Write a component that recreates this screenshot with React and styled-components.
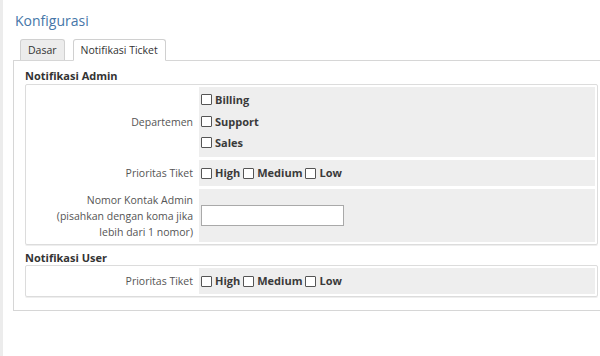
import React from 'react'
import styled, { createGlobalStyle } from 'styled-components'

const GlobalStyle = createGlobalStyle`
  html, body {
    margin: 0;
    padding: 0;
    background: #fff;
    overflow: hidden;
  }
  body {
    font-family: "Open Sans", "DejaVu Sans", sans-serif;
    color: #444;
  }
`

const Page = styled.div`
  width: 620px;
  min-height: 356px;
  border-left: 3px solid #ececec;
  box-sizing: border-box;
  padding: 11px 0 0 10px;
`

const Title = styled.h2`
  margin: 0 0 9px 2px;
  font-size: 14px;
  font-weight: 400;
  line-height: 19px;
  color: #4676a8;
`

const Tabs = styled.div`
  display: flex;
  gap: 8px;
  padding-left: 7px;
  border-bottom: 1px solid #d6d6d6;
  height: 21px;
`

const Tab = styled.div`
  box-sizing: border-box;
  padding: 0 7px;
  font-size: 10.5px;
  line-height: 20px;
  color: #333;
  border: 1px solid #d0d0d0;
  border-bottom: ${p => (p.active ? '1px solid #fff' : 'none')};
  background: ${p => (p.active ? '#fff' : '#ececec')};
  border-radius: 3px 3px 0 0;
  margin-bottom: ${p => (p.active ? '-1px' : '0')};
  height: ${p => (p.active ? '22px' : '21px')};
`

const Panel = styled.div`
  width: 597px;
  box-sizing: border-box;
  border: 1px solid #d6d6d6;
  border-top: none;
  padding: 8px 11px 13px 11px;
`

const Legend = styled.div`
  font-size: 11px;
  font-weight: 700;
  color: #333;
  line-height: 14px;
  margin: 0 0 ${p => p.gap || 0}px 0;
`

const Fieldset = styled.div`
  display: grid;
  grid-template-columns: 168px 1fr;
  gap: 3px;
  border: 1px solid #dcdcdc;
  border-radius: 2px;
  padding: 2px;
  margin-bottom: ${p => p.gap || 0}px;
  box-shadow: 0 1px 0 #eee;
`

const Label = styled.div`
  font-size: 10.5px;
  color: #555;
  text-align: right;
  line-height: 16px;
  align-self: center;
  padding-right: 3px;
`

const Cell = styled.div`
  background: #eeeeee;
  padding: ${p => p.pad || '5px 2px'};
  display: flex;
  flex-direction: ${p => (p.column ? 'column' : 'row')};
  align-items: ${p => (p.column ? 'flex-start' : 'center')};
  min-height: ${p => p.h || 0}px;
  box-sizing: border-box;
`

const Check = styled.label`
  display: inline-flex;
  align-items: center;
  font-size: 11px;
  font-weight: 700;
  color: #3a3a3a;
  line-height: ${p => p.lh || 16}px;
  margin-right: 3px;

  &::before {
    content: '';
    width: 9px;
    height: 9px;
    border: 1px solid #555;
    border-radius: 1px;
    background: #fff;
    margin-right: 3px;
  }
`

const Input = styled.input`
  width: 143px;
  height: 21px;
  box-sizing: border-box;
  border: 1px solid #a9a9a9;
  background: #fff;
  margin: 0;
`

function Priority() {
  return (
    <>
      <Check>High</Check>
      <Check>Medium</Check>
      <Check>Low</Check>
    </>
  )
}

export default function App() {
  return (
    <>
      <GlobalStyle />
      <Page>
        <Title>Konfigurasi</Title>
        <Tabs>
          <Tab>Dasar</Tab>
          <Tab active>Notifikasi Ticket</Tab>
        </Tabs>
        <Panel>
          <Legend gap={1}>Notifikasi Admin</Legend>
          <Fieldset gap={6}>
            <Label>Departemen</Label>
            <Cell column pad="2px 2px" h={70}>
              <Check lh={21.5}>Billing</Check>
              <Check lh={21.5}>Support</Check>
              <Check lh={21.5}>Sales</Check>
            </Cell>
            <Label>Prioritas Tiket</Label>
            <Cell h={26}>
              <Priority />
            </Cell>
            <Label>
              Nomor Kontak Admin
              <br />
              (pisahkan dengan koma jika
              <br />
              lebih dari 1 nomor)
            </Label>
            <Cell h={53}>
              <Input type="text" />
            </Cell>
          </Fieldset>
          <Legend>Notifikasi User</Legend>
          <Fieldset>
            <Label>Prioritas Tiket</Label>
            <Cell h={26}>
              <Priority />
            </Cell>
          </Fieldset>
        </Panel>
      </Page>
    </>
  )
}
